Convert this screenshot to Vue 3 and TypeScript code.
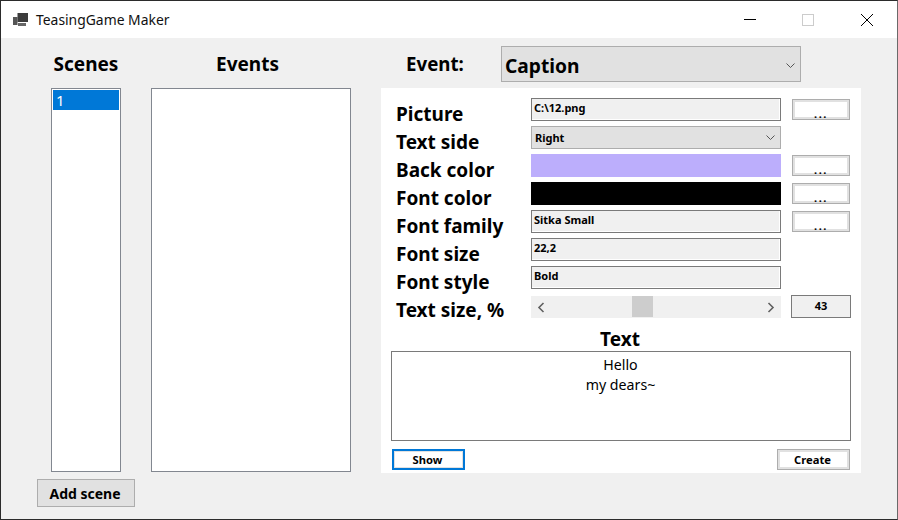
<script setup lang="ts">
interface Row {
  label: string
  kind: 'input' | 'select' | 'color' | 'scroll'
  value?: string
  color?: string
  browse?: boolean
}

const rows: Row[] = [
  { label: 'Picture', kind: 'input', value: 'C:\\12.png', browse: true },
  { label: 'Text side', kind: 'select', value: 'Right' },
  { label: 'Back color', kind: 'color', color: '#bcaefc', browse: true },
  { label: 'Font color', kind: 'color', color: '#000000', browse: true },
  { label: 'Font family', kind: 'input', value: 'Sitka Small', browse: true },
  { label: 'Font size', kind: 'input', value: '22,2' },
  { label: 'Font style', kind: 'input', value: 'Bold' },
  { label: 'Text size, %', kind: 'scroll' },
]
</script>

<template>
  <div class="window">
    <!-- Title bar -->
    <header class="titlebar">
      <svg class="app-icon" width="15" height="13" viewBox="0 0 15 13">
        <rect x="0" y="4" width="4.5" height="8" fill="#555" />
        <rect x="4.5" y="0" width="10.5" height="9" fill="#3c3c3c" />
        <rect x="5" y="10" width="8" height="3" fill="#666" />
      </svg>
      <span class="title">TeasingGame Maker</span>
      <div class="window-btns">
        <svg width="12" height="12" viewBox="0 0 12 12"><path d="M0 5.5h12" stroke="#000" /></svg>
        <svg class="max-btn" width="12" height="12" viewBox="0 0 12 12"><rect x=".5" y=".5" width="11" height="11" fill="none" stroke="#ccc" /></svg>
        <svg width="12" height="12" viewBox="0 0 12 12"><path d="M0 0l12 12M12 0L0 12" stroke="#000" /></svg>
      </div>
    </header>

    <main class="body">
      <!-- Scenes -->
      <section class="scenes">
        <h2 class="col-head">Scenes</h2>
        <div class="list scene-list">
          <div class="list-item selected">1</div>
        </div>
        <button class="add-btn">Add scene</button>
      </section>

      <!-- Events -->
      <section class="events">
        <h2 class="col-head events-head">Events</h2>
        <div class="list event-list"></div>
      </section>

      <!-- Event editor -->
      <section class="editor">
        <div class="event-row">
          <span class="event-label">Event:</span>
          <div class="event-combo">
            <span>Caption</span>
            <svg class="chev" width="9" height="5" viewBox="0 0 9 5"><path d="M.5.5l4 4 4-4" fill="none" stroke="#555" /></svg>
          </div>
        </div>

        <div class="panel">
          <div class="form">
            <template v-for="row in rows" :key="row.label">
              <label class="row-label">{{ row.label }}</label>
              <div v-if="row.kind === 'input'" class="field">{{ row.value }}</div>
              <div v-else-if="row.kind === 'select'" class="field select">
                <span>{{ row.value }}</span>
                <svg class="chev" width="9" height="5" viewBox="0 0 9 5"><path d="M.5.5l4 4 4-4" fill="none" stroke="#555" /></svg>
              </div>
              <div v-else-if="row.kind === 'color'" class="swatch" :style="{ background: row.color }"></div>
              <div v-else class="scrollbar">
                <svg width="8" height="11" viewBox="0 0 8 11"><path d="M6.5 1l-4.5 4.5 4.5 4.5" fill="none" stroke="#606060" stroke-width="1.6" /></svg>
                <div class="thumb"></div>
                <svg width="8" height="11" viewBox="0 0 8 11"><path d="M1.5 1l4.5 4.5-4.5 4.5" fill="none" stroke="#606060" stroke-width="1.6" /></svg>
              </div>
              <button v-if="row.browse" class="browse">...</button>
              <div v-else-if="row.kind === 'scroll'" class="size-box">43</div>
              <span v-else></span>
            </template>
          </div>

          <h3 class="text-head">Text</h3>
          <div class="text-box">Hello<br />my dears~</div>

          <div class="actions">
            <button class="small-btn default">Show</button>
            <button class="small-btn">Create</button>
          </div>
        </div>
      </section>
    </main>
  </div>
</template>

<style>
html,
body {
  margin: 0;
  background: #f0f0f0;
}
</style>

<style scoped>
.window {
  width: 898px;
  height: 520px;
  box-sizing: border-box;
  border: 1px solid #2b2b2b;
  border-right-color: #6a6a6a;
  background: #f0f0f0;
  font-family: "Noto Sans", "Open Sans", sans-serif;
  color: #000;
  overflow: hidden;
}

.titlebar {
  height: 37px;
  background: #fff;
  display: flex;
  align-items: center;
  padding-left: 12px;
}

.app-icon {
  margin-right: 8px;
}

.title {
  font-size: 13.9px;
  color: #111;
}

.window-btns {
  margin-left: auto;
  display: flex;
  gap: 46px;
  padding-right: 24px;
}

.max-btn {
  margin-right: 1px;
}

.body {
  display: flex;
  align-items: flex-start;
  padding-left: 36px;
}

.scenes {
  width: 98px;
  display: flex;
  flex-direction: column;
  align-items: center;
}

.events {
  width: 200px;
  margin-left: 16px;
}

.editor {
  width: 480px;
  margin-left: 30px;
}

.col-head {
  margin: 0;
  height: 50px;
  line-height: 52px;
  font-size: 19px;
  font-weight: 700;
  text-align: center;
}

.events-head {
  padding-right: 7px;
}

.list {
  box-sizing: border-box;
  height: 384px;
  background: #fff;
  border: 1px solid #828790;
}

.scene-list {
  width: 70px;
  padding: 1px;
}

.event-list {
  width: 200px;
}

.list-item {
  height: 20px;
  line-height: 20px;
  font-size: 15px;
  padding-left: 3px;
}

.selected {
  background: #0078d7;
  color: #fff;
}

.add-btn {
  box-sizing: border-box;
  width: 98px;
  height: 28px;
  margin-top: 7px;
  padding: 0 2px 0 0;
  background: #e1e1e1;
  border: 1px solid #adadad;
  font: 700 14px "Noto Sans", "Open Sans", sans-serif;
}

.event-row {
  height: 50px;
  display: flex;
  align-items: flex-start;
}

.event-label {
  margin: 13px 0 0 25px;
  width: 95px;
  font-size: 18.7px;
  font-weight: 700;
  line-height: 26px;
}

.event-combo {
  box-sizing: border-box;
  width: 300px;
  height: 36px;
  margin-top: 8px;
  padding: 2px 5px 0 3px;
  background: #e1e1e1;
  border: 1px solid #adadad;
  display: flex;
  align-items: center;
  justify-content: space-between;
  font-size: 19.2px;
  font-weight: 700;
}

.panel {
  height: 385px;
  box-sizing: border-box;
  padding-top: 10px;
  background: #fff;
}

.form {
  display: grid;
  grid-template-columns: 135px 250px 70px;
  grid-auto-rows: 23px;
  row-gap: 5px;
  padding-left: 15px;
}

.row-label {
  font-size: 19px;
  font-weight: 700;
  line-height: 32px;
  height: 23px;
  white-space: nowrap;
}

.field {
  box-sizing: border-box;
  height: 23px;
  padding: 0 2px;
  background: #f0f0f0;
  border: 1px solid #7a7a7a;
  box-shadow: inset -1px -1px 0 #fff;
  font-size: 11px;
  font-weight: 700;
  line-height: 18px;
  white-space: nowrap;
}

.field.select {
  display: flex;
  align-items: center;
  justify-content: space-between;
  padding: 0 5px 0 3px;
  background: #e1e1e1;
  border-color: #adadad;
  box-shadow: none;
}

.swatch {
  height: 23px;
}

.scrollbar {
  height: 22px;
  margin-top: 2px;
  background: #f0f0f0;
  display: flex;
  align-items: center;
  justify-content: space-between;
  padding: 0 6px;
  position: relative;
}

.thumb {
  position: absolute;
  left: 101px;
  top: 0;
  width: 21px;
  height: 21px;
  background: #cdcdcd;
}

.browse {
  box-sizing: border-box;
  width: 58px;
  height: 21px;
  margin: 1px 0 0 11px;
  padding: 0;
  background: #fff;
  border: 1px solid #adadad;
  box-shadow: inset 0 0 0 2px #e1e1e1;
  outline: none;
  letter-spacing: 1.5px;
  font: 700 11px/27px "Noto Sans", "Open Sans", sans-serif;
}

.size-box {
  box-sizing: border-box;
  width: 60px;
  height: 23px;
  margin: 1px 0 0 10px;
  background: #f0f0f0;
  border: 1px solid #7a7a7a;
  font-size: 11px;
  font-weight: 700;
  line-height: 20px;
  text-align: center;
}

.text-head {
  margin: 8px 2px 0 0;
  height: 26px;
  line-height: 29px;
  font-size: 19px;
  font-weight: 700;
  text-align: center;
}

.text-box {
  box-sizing: border-box;
  width: 460px;
  height: 90px;
  margin-left: 10px;
  padding: 3px 1px 0 0;
  background: #fff;
  border: 1px solid #7a7a7a;
  font-size: 14.2px;
  line-height: 20px;
  text-align: center;
}

.actions {
  display: flex;
  justify-content: space-between;
  margin: 8px 11px 0;
}

.small-btn {
  box-sizing: border-box;
  width: 73px;
  height: 21px;
  padding: 0 2px 0 0;
  background: #fff;
  border: 1px solid #adadad;
  box-shadow: inset 0 0 0 2px #e1e1e1;
  font: 700 11.2px "Noto Sans", "Open Sans", sans-serif;
}

.small-btn.default {
  border: 2px solid #0078d7;
  box-shadow: inset 0 0 0 1px #e1e1e1;
}

.chev {
  flex: none;
}
</style>
